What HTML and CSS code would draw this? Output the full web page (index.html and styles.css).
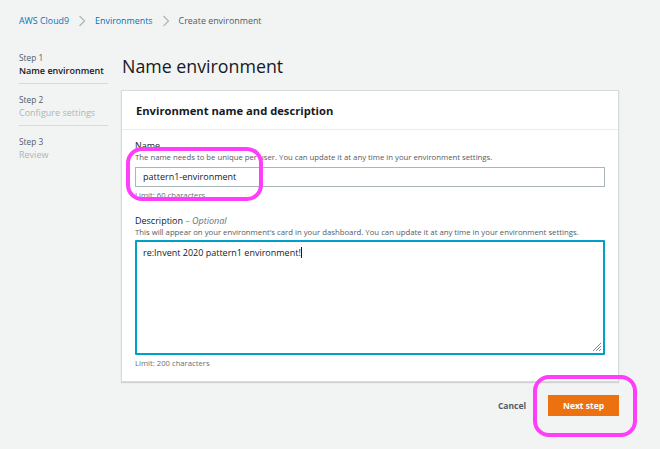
FILE: index.html
```html
<!DOCTYPE html>
<html lang="en">
<head>
<meta charset="utf-8">
<link rel="stylesheet" href="styles.css">
</head>
<body>
<div class="breadcrumbs">
  <a class="crumb-link">AWS Cloud9</a>
  <svg class="chev" width="8" height="12" viewBox="0 0 8 12"><path d="M1.5 1 L6.5 6 L1.5 11" fill="none" stroke="#aab7b8" stroke-width="1.2"/></svg>
  <a class="crumb-link">Environments</a>
  <svg class="chev" width="8" height="12" viewBox="0 0 8 12"><path d="M1.5 1 L6.5 6 L1.5 11" fill="none" stroke="#aab7b8" stroke-width="1.2"/></svg>
  <span class="crumb-current">Create environment</span>
</div>
<div class="layout">
  <nav class="steps">
    <div class="step">
      <div class="step-num">Step 1</div>
      <div class="step-title active">Name environment</div>
    </div>
    <div class="step">
      <div class="step-num">Step 2</div>
      <div class="step-title">Configure settings</div>
    </div>
    <div class="step last">
      <div class="step-num">Step 3</div>
      <div class="step-title">Review</div>
    </div>
  </nav>
  <main class="main">
    <h1 class="page-title">Name environment</h1>
    <section class="card">
      <div class="card-header">Environment name and description</div>
      <div class="card-body">
        <div class="field field-name">
          <div class="label">Name</div>
          <div class="hint">The name needs to be unique per user. You can update it at any time in your environment settings.</div>
          <div class="input">pattern1-environment</div>
          <div class="limit">Limit: 60 characters</div>
        </div>
        <div class="field">
          <div class="label">Description <span class="optional">– Optional</span></div>
          <div class="hint">This will appear on your environment's card in your dashboard. You can update it at any time in your environment settings.</div>
          <div class="textarea">re:Invent 2020 pattern1 environment!<span class="caret"></span>
            <svg class="grip" width="10" height="10" viewBox="0 0 10 10"><path d="M9 1 L1 9 M9 4 L4 9 M9 7 L7 9" stroke="#7d8998" stroke-width="1"/></svg>
          </div>
          <div class="limit">Limit: 200 characters</div>
        </div>
      </div>
    </section>
    <div class="actions">
      <span class="cancel">Cancel</span>
      <span class="primary">Next step</span>
    </div>
  </main>
</div>
<div class="mark mark-name"></div>
<div class="mark mark-next"></div>
</body>
</html>
```
FILE: styles.css
```css
* { box-sizing: border-box; }
html, body { margin: 0; padding: 0; }
body {
  background: #f2f3f3;
  font-family: "Open Sans", "Noto Sans", sans-serif;
  color: #16191f;
  width: 660px;
  height: 449px;
  overflow: hidden;
  position: relative;
}
.breadcrumbs {
  display: flex;
  align-items: center;
  gap: 7px;
  padding: 14px 0 0 19px;
  height: 27px;
  font-size: 8.9px;
  line-height: 12px;
}
.crumb-link { color: #0073bb; }
.crumb-current { color: #545b64; }
.chev { margin: 0 2px; }
.layout {
  display: flex;
  padding-left: 19px;
  margin-top: 23px;
}
.steps {
  width: 89px;
  flex: none;
}
.step {
  border-bottom: 1px solid #d5dbdb;
  padding: 2px 0 6px;
}
.step + .step { padding-top: 10px; }
.step.last { border-bottom: none; }
.step-num {
  font-size: 8.3px;
  line-height: 12px;
  color: #545b64;
}
.step-title {
  font-size: 9px;
  line-height: 13px;
  color: #aab7b8;
}
.step-title.active { color: #16191f; font-weight: 600; }
.main {
  margin-left: 13px;
  width: 498px;
  flex: none;
}
.page-title {
  margin: 0;
  font-size: 17.8px;
  font-weight: 400;
  line-height: 26px;
  height: 40px;
  padding-top: 3px;
  padding-left: 1px;
  color: #16191f;
}
.card {
  background: #fff;
  border: 1px solid #d5dbdb;
  box-shadow: 0 1px 1px rgba(0,28,36,0.15);
  height: 292px;
}
.card-header {
  height: 39px;
  padding: 13px 14px 0;
  font-size: 11.2px;
  font-weight: 700;
  line-height: 14px;
  border-bottom: 1px solid #eaeded;
}
.card-body {
  padding: 9px 13px 0;
}
.label {
  font-size: 9px;
  line-height: 13px;
  color: #16191f;
}
.optional { font-style: italic; color: #687078; }
.hint {
  font-size: 7.75px;
  line-height: 11px;
  color: #545b64;
}
.input {
  margin-top: 4px;
  height: 20px;
  border: 1px solid #aab7b8;
  padding: 0 7px;
  font-size: 9px;
  line-height: 18px;
}
.limit {
  font-size: 7.7px;
  line-height: 10px;
  color: #687078;
  margin-top: 3px;
}
.field-name { height: 75px; }
.textarea {
  position: relative;
  margin-top: 2px;
  height: 115px;
  border: 2px solid #00a1c9;
  border-radius: 1px;
  padding: 4px 6px;
  font-size: 9px;
  line-height: 13px;
}
.caret {
  display: inline-block;
  width: 1px;
  height: 11px;
  background: #16191f;
  vertical-align: -2px;
}
.grip {
  position: absolute;
  right: 1px;
  bottom: 1px;
}
.actions {
  display: flex;
  justify-content: flex-end;
  align-items: center;
  gap: 22px;
  margin-top: 13px;
}
.cancel {
  font-size: 8.5px;
  font-weight: 700;
  color: #545b64;
}
.primary {
  background: #ec7211;
  color: #fff;
  font-size: 8.5px;
  font-weight: 700;
  width: 71px;
  height: 21px;
  line-height: 21px;
  text-align: center;
}
.mark {
  position: absolute;
  border: 4px solid #ff3dfa;
  border-radius: 16px;
}
.mark-name { left: 126px; top: 147px; width: 137px; height: 54px; }
.mark-next { left: 533px; top: 375px; width: 104px; height: 62px; }
```
